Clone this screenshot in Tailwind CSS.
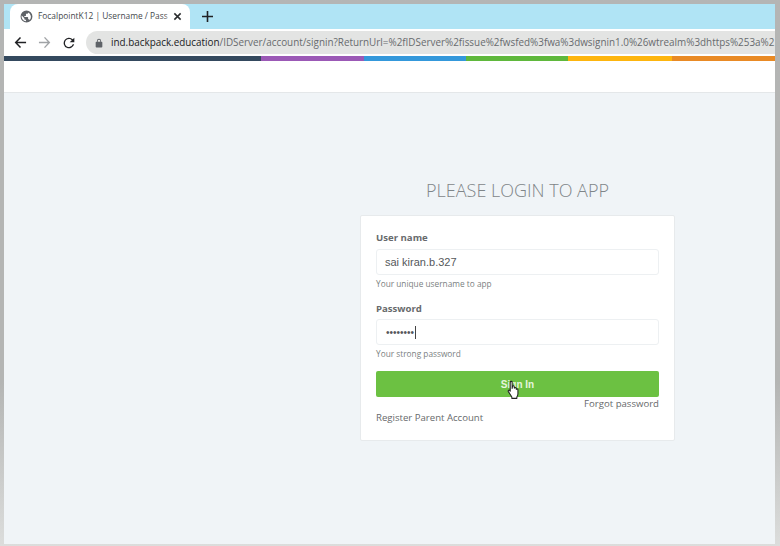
<!DOCTYPE html>
<html lang="en">
  <head>
    <meta charset="UTF-8" />
    <meta name="viewport" content="width=device-width, initial-scale=1.0" />
    <title>FocalpointK12 | Username / Password</title>
    <script src="https://cdn.jsdelivr.net/npm/@tailwindcss/browser@4"></script>
  </head>
  <body class="h-[546px] w-[780px] overflow-hidden bg-gradient-to-b from-[#b4b5b4] from-70% to-[#dcdddc] pt-[4px] pr-[5px] pb-[2px] pl-[4px] font-['Open_Sans',sans-serif]">
    <div class="flex h-full flex-col overflow-hidden bg-[#f0f4f7]">
      <!-- tab strip -->
      <div class="flex h-[25px] shrink-0 items-end bg-[#b0e4f5] pl-[6px]">
        <div class="flex h-[25px] w-[180px] items-center rounded-t-[8px] bg-white pl-[10px] pr-[7px]">
          <svg class="h-[13px] w-[13px] shrink-0" viewBox="0 0 24 24"><path fill="#5f6368" d="M12 1a11 11 0 1 0 0 22 11 11 0 0 0 0-22Zm-1 19.900A9 9 0 0 1 3.200 10L8 15v1c0 1.100.9 2 2 2h1v2.900Zm7-2.500a2 2 0 0 0-2-1.400h-1v-3c0-.6-.4-1-1-1H8v-2h2c.6 0 1-.4 1-1V7h2c1.100 0 2-.9 2-2v-.4a9 9 0 0 1 3 13.800Z"/></svg>
          <span class="relative ml-[5px] w-[133px] overflow-hidden font-['Open_Sans',sans-serif] text-[8.400px] whitespace-nowrap text-[#45484c]">FocalpointK12 | Username / Pass<span class="absolute top-0 right-0 h-full w-[6px] bg-gradient-to-r from-white/0 to-white"></span></span>
          <svg class="ml-[2px] h-[9px] w-[9px] shrink-0" viewBox="0 0 10 10"><path stroke="#2a2c2e" stroke-width="1.700" d="M1.500 1.500l7 7M8.500 1.500l-7 7"/></svg>
        </div>
        <svg class="mb-[7px] ml-[12px] h-[11px] w-[11px]" viewBox="0 0 11 11"><path stroke="#202124" stroke-width="1.600" d="M5.500 0v11M0 5.500h11"/></svg>
      </div>

      <!-- toolbar -->
      <div class="flex h-[27px] shrink-0 items-center bg-white pl-[10px]">
        <svg class="h-[13px] w-[13px] shrink-0" viewBox="0 0 14 14"><path fill="none" stroke="#202124" stroke-width="1.600" d="M13 7H2M7 1.500 1.800 7 7 12.500"/></svg>
        <svg class="ml-[11px] h-[13px] w-[13px] shrink-0" viewBox="0 0 14 14"><path fill="none" stroke="#a0a3a6" stroke-width="1.500" d="M1 7h11M7 1.500 12.200 7 7 12.500"/></svg>
        <svg class="ml-[10px] h-[16px] w-[16px] shrink-0" viewBox="0 0 24 24"><path fill="#202124" d="M17.650 6.350A8 8 0 1 0 19.730 14h-2.080A6 6 0 1 1 12 6c1.660 0 3.140.69 4.220 1.780L13 11h7V4l-2.350 2.350Z"/></svg>
        <div class="ml-[9px] flex h-[23px] min-w-0 flex-1 items-center overflow-hidden rounded-l-full bg-[#e3e4e3] pl-[8px]">
          <svg class="h-[10px] w-[10px] shrink-0" viewBox="0 0 24 24"><path fill="#5f6368" d="M18 9h-1V7a5 5 0 0 0-10 0v2H6a2 2 0 0 0-2 2v10c0 1.100.9 2 2 2h12a2 2 0 0 0 2-2V11a2 2 0 0 0-2-2ZM9 7a3 3 0 0 1 6 0v2H9V7Z"/></svg>
          <span class="ml-[7px] text-[9.880px] whitespace-nowrap text-[#686b6e]"><span class="text-[#202124]">ind.backpack.education</span>/IDServer/account/signin?ReturnUrl=%2fIDServer%2fissue%2fwsfed%3fwa%3dwsignin1.0%26wtrealm%3dhttps%253a%2</span>
        </div>
      </div>

      <!-- colour stripe -->
      <div class="flex h-[5px] shrink-0">
        <div class="w-[257px] bg-[#34495e]"></div>
        <div class="w-[103px] bg-[#9b59b6]"></div>
        <div class="w-[102px] bg-[#3498db]"></div>
        <div class="w-[102px] bg-[#5fb83c]"></div>
        <div class="w-[104px] bg-[#fdb50e]"></div>
        <div class="flex-1 bg-[#e98a25]"></div>
      </div>

      <!-- app header -->
      <div class="h-[32px] shrink-0 border-b border-[#e4e7e9] bg-white"></div>

      <!-- login -->
      <div class="flex flex-1 flex-col pt-[85px] pl-[356px]">
        <h1 class="w-[315px] text-center text-[18px] leading-[25px] font-light text-[#7f8588]">PLEASE LOGIN TO APP</h1>
        <form class="mt-[12px] h-[226px] w-[315px] rounded-[2px] border border-[#e7eaec] bg-white px-[15px] pt-[14px]">
          <label class="block text-[9.600px] leading-[15px] font-bold text-[#676a6c]">User name</label>
          <div class="mt-[4px] flex h-[26px] items-center rounded-[3px] border border-[#edf0f2] bg-white px-[8px] font-['Liberation_Sans',sans-serif] text-[11px] text-[#55585b]">sai kiran.b.327</div>
          <p class="mt-[3px] text-[8.300px] leading-[12px] text-[#7b7f82]">Your unique username to app</p>
          <label class="mt-[11px] block text-[9.600px] leading-[15px] font-bold text-[#676a6c]">Password</label>
          <div class="mt-[3px] flex h-[26px] items-center rounded-[3px] border border-[#edf0f2] bg-white px-[9px] font-['Liberation_Sans',sans-serif] text-[10px] text-[#55585b]">••••••••<span class="ml-[1px] h-[13px] w-px bg-[#444]"></span></div>
          <p class="mt-[3px] text-[8.300px] leading-[12px] text-[#7b7f82]">Your strong password</p>
          <div class="relative mt-[11px] flex h-[26px] items-center justify-center rounded-[2px] bg-[#6cc142] font-['Liberation_Sans',sans-serif] text-[10px] font-bold text-[#e6f5de]">Sign In
            <svg class="absolute top-[9px] left-[131px] h-[20px] w-[15px]" viewBox="0 0 14 18"><path fill="#fff" stroke="#222" stroke-width="1" stroke-linejoin="round" d="M3 1.800c0-1.100 1.800-1.100 1.800 0V7.500l.4-2c.3-.8 1.500-.6 1.500.3l.2 1.500c.2-.8 1.500-.8 1.600.1l.2 1c.3-.7 1.500-.5 1.500.4v3.700c0 1.200-.5 2.200-1 3v1.300H4.500v-1.300L1.300 10.500c-.6-1 .5-1.900 1.200-1.100L3 10.200V1.800Z"/></svg>
          </div>
          <div class="text-right text-[9.600px] leading-[14px] text-[#676a6c]">Forgot password</div>
          <div class="text-[9.600px] leading-[14px] text-[#676a6c]">Register Parent Account</div>
        </form>
      </div>
    </div>
  </body>
</html>
